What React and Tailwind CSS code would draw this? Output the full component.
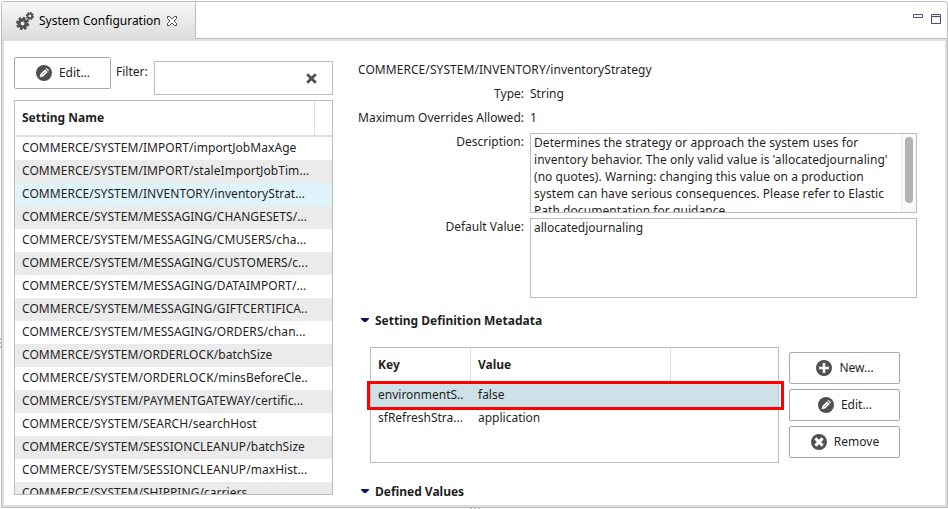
import React from "react";

const settings = [
  "COMMERCE/SYSTEM/IMPORT/importJobMaxAge",
  "COMMERCE/SYSTEM/IMPORT/staleImportJobTim...",
  "COMMERCE/SYSTEM/INVENTORY/inventoryStrat...",
  "COMMERCE/SYSTEM/MESSAGING/CHANGESETS/...",
  "COMMERCE/SYSTEM/MESSAGING/CMUSERS/cha...",
  "COMMERCE/SYSTEM/MESSAGING/CUSTOMERS/c...",
  "COMMERCE/SYSTEM/MESSAGING/DATAIMPORT/...",
  "COMMERCE/SYSTEM/MESSAGING/GIFTCERTIFICA..",
  "COMMERCE/SYSTEM/MESSAGING/ORDERS/chan...",
  "COMMERCE/SYSTEM/ORDERLOCK/batchSize",
  "COMMERCE/SYSTEM/ORDERLOCK/minsBeforeCle..",
  "COMMERCE/SYSTEM/PAYMENTGATEWAY/certific...",
  "COMMERCE/SYSTEM/SEARCH/searchHost",
  "COMMERCE/SYSTEM/SESSIONCLEANUP/batchSize",
  "COMMERCE/SYSTEM/SESSIONCLEANUP/maxHist...",
  "COMMERCE/SYSTEM/SHIPPING/carriers",
];

function Gear({ cx, cy, r, hole, teeth, w }) {
  return (
    <g transform={`translate(${cx} ${cy})`}>
      {Array.from({ length: teeth }, (_, i) => (
        <rect key={i} x={-w / 2} y={-r} width={w} height={r / 2} fill="#505050" transform={`rotate(${(i * 360) / teeth + 15})`} />
      ))}
      <circle r={(r * 0.76 + hole) / 2} fill="none" stroke="#505050" strokeWidth={r * 0.76 - hole} />
    </g>
  );
}

function GearsIcon() {
  return (
    <svg width="18" height="18" viewBox="0 0 18 18" className="block shrink-0">
      <Gear cx={6.6} cy={11.5} r={6.6} hole={2} teeth={8} w={2.8} />
      <Gear cx={13.9} cy={4} r={4.1} hole={1.4} teeth={8} w={1.8} />
    </svg>
  );
}

function RoundIcon({ kind }) {
  return (
    <svg width="16" height="16" viewBox="0 0 16 16" className="block shrink-0">
      <circle cx="8" cy="8" r="8" fill="#505050" />
      {kind === "plus" && <path d="M8 3v10M3 8h10" stroke="#fff" strokeWidth="2.6" />}
      {kind === "remove" && <path d="M4.4 4.4l7.2 7.2M11.6 4.4l-7.2 7.2" stroke="#fff" strokeWidth="3" />}
      {kind === "edit" && (
        <g fill="#fff">
          <path d="M3.700 12.300l.7-3.400 4.700-4.700 2.700 2.700L7.100 11.600z" />
          <path d="M9.700 3.600l.9-.7 2.500 2.500-.7.900z" />
          <path d="M6 10.200l3.800-3.800" stroke="#505050" strokeWidth=".6" />
        </g>
      )}
    </svg>
  );
}

function Button({ kind, label, width }) {
  return (
    <button className={`flex h-8 shrink-0 items-center justify-center rounded-[2px] border border-[#a9a9a9] bg-white pl-px ${width}`}>
      <RoundIcon kind={kind} />
      <span className="ml-[7px]">{label}</span>
    </button>
  );
}

function SectionTitle({ children }) {
  return (
    <div className="flex h-4 items-center font-bold">
      <svg width="8" height="4" viewBox="0 0 8 4" className="mr-1.5 mb-0.5 ml-[3px] block">
        <path d="M0 0h8v1L5 4H3L0 1z" fill="#0b1560" />
      </svg>
      {children}
    </div>
  );
}

function Field({ label, children }) {
  return (
    <div className="flex h-4 items-center">
      <div className="w-[166px] text-right">{label}</div>
      <div className="ml-1.5">{children}</div>
    </div>
  );
}

export default function App() {
  return (
    <div className="relative flex h-[509px] w-[948px] overflow-hidden bg-white pt-px pl-px font-['Noto_Sans',sans-serif] text-[12px] leading-4 whitespace-nowrap text-[#1f1f1f]">
      <div className="flex h-[507px] w-[947px] flex-col rounded-t-[3px] border border-[#bdbdbd]">
        <div className="flex h-[37px] shrink-0">
          <div className="flex w-[194px] items-center rounded-tl-[2px] border-r border-[#bdbdbd] bg-gradient-to-b from-[#f7f7f7] to-[#dddddd] pl-3.5 text-black">
            <GearsIcon />
            <span className="ml-[5px]">System Configuration</span>
            <svg width="10" height="10" viewBox="0 0 10 10" className="ml-1.5 block">
              <path d="M.5 .5h2L5 3 7.500 .5h2v2L7 5l2.500 2.500v2h-2L5 7 2.500 9.500h-2v-2L3 5 .5 2.500z" fill="#fff" stroke="#333" strokeWidth=".9" />
            </svg>
          </div>
          <div className="flex flex-1 items-start justify-end gap-2 border-b border-[#bdbdbd] pt-3 pr-1.5">
            <svg width="10" height="4" viewBox="0 0 10 4" className="block">
              <path d="M.5 .5h9v3h-9z" fill="#fff" stroke="#4a4f74" />
            </svg>
            <svg width="10" height="10" viewBox="0 0 10 10" className="block">
              <path d="M.5 .5h9v9h-9zM0 2.500h10" fill="#f7f9f6" stroke="#4a4f74" />
            </svg>
          </div>
        </div>

        <div className="flex min-h-0 flex-1 border-2 border-[#dedede]">
          <div className="w-[329px] shrink-0 pl-2.5">
            <div className="flex h-[59px] items-start pt-4">
              <Button kind="edit" label="Edit..." width="w-[97px]" />
              <div className="mt-[7px] ml-[5px] w-[38px]">Filter:</div>
              <div className="mt-1 flex h-[34px] w-[179px] items-center justify-end border border-[#bdbdbd] pr-[15px]">
                <svg width="11" height="11" viewBox="0 0 11 11" className="block">
                  <path d="M1.200 1.200l8.600 8.600M9.800 1.200l-8.600 8.600" stroke="#505050" strokeWidth="2.800" />
                </svg>
              </div>
            </div>
            <div className="h-[395px] overflow-hidden border border-[#bdbdbd]">
              <div className="flex h-9 border-b-2 border-[#dedede] font-bold">
                <div className="flex w-[300px] items-center border-r border-[#dedede] pl-[7px]">Setting Name</div>
              </div>
              {settings.map((name, i) => (
                <div key={name} className={`h-[23px] pl-[7px] leading-[22px] tracking-[0.06px] ${i === 2 ? "bg-[#dff3fa]" : i % 2 ? "bg-[#ebebeb]" : "bg-white"}`}>
                  {name}
                </div>
              ))}
            </div>
          </div>

          <div className="min-w-0 flex-1 pt-[21px] pl-[25px]">
            <div className="flex flex-col gap-2">
              <div className="tracking-[0.06px]">COMMERCE/SYSTEM/INVENTORY/inventoryStrategy</div>
              <Field label="Type:">String</Field>
              <Field label="Maximum Overrides Allowed:">1</Field>
            </div>
            <div className="mt-[7px] flex">
              <div className="w-[166px] pt-px text-right">Description:</div>
              <div className="ml-1.5 flex h-20 w-[387px] overflow-hidden border border-[#bdbdbd]">
                <div className="flex-1 pl-[3px] leading-[17px] tracking-[0.05px] whitespace-pre">
                  {"Determines the strategy or approach the system uses for\ninventory behavior. The only valid value is 'allocatedjournaling'\n(no quotes). Warning: changing this value on a production\nsystem can have serious consequences. Please refer to Elastic\nPath documentation for guidance."}
                </div>
                <div className="w-[15px] border-l border-[#e8e8e8] bg-[#fafafa] pt-[3px] pl-[3px]">
                  <div className="h-[66px] w-2 rounded-full bg-[#b3b3b3]" />
                </div>
              </div>
            </div>
            <div className="mt-[5px] flex">
              <div className="w-[166px] pt-px text-right">Default Value:</div>
              <div className="ml-1.5 h-20 w-[387px] border border-[#bdbdbd] pl-[3px] leading-[17px]">allocatedjournaling</div>
            </div>

            <div className="mt-[15px]">
              <SectionTitle>Setting Definition Metadata</SectionTitle>
            </div>
            <div className="mt-[18px] ml-3 flex">
              <div className="relative h-[116px] w-[409px] border border-[#bdbdbd]">
                <div className="flex h-9 border-b-2 border-[#dedede] font-bold">
                  <div className="flex w-[100px] items-center border-r border-[#dedede] pl-[7px]">Key</div>
                  <div className="flex w-[200px] items-center border-r border-[#dedede] pl-[7px]">Value</div>
                </div>
                <div className="flex h-[23px] bg-[#cfe1e8] leading-[22px]">
                  <div className="w-[100px] pl-[7px]">environmentS..</div>
                  <div className="pl-[7px]">false</div>
                </div>
                <div className="flex h-[23px] leading-[22px]">
                  <div className="w-[100px] pl-[7px]">sfRefreshStra...</div>
                  <div className="pl-[7px]">application</div>
                </div>
                <div className="absolute top-[33px] -left-1 h-[29px] w-[417px] border-3 border-[#ff0000]" />
              </div>
              <div className="mt-[5px] ml-2.5 flex flex-col gap-[5px]">
                <Button kind="plus" label="New..." width="w-[111px]" />
                <Button kind="edit" label="Edit..." width="w-[111px]" />
                <Button kind="remove" label="Remove" width="w-[111px]" />
              </div>
            </div>
            <div className="mt-[21px]">
              <SectionTitle>Defined Values</SectionTitle>
            </div>
          </div>
        </div>
      </div>
      <svg width="10" height="1" viewBox="0 0 10 1" className="absolute top-[508px] left-[470px]">
        <path d="M0 0h2v1H0zM4 0h2v1H4zM8 0h2v1H8z" fill="#bbb" />
      </svg>
      <svg width="1" height="10" viewBox="0 0 1 10" className="absolute top-[338px] left-0">
        <path d="M0 0h1v2H0zM0 4h1v2H0zM0 8h1v2H0z" fill="#bbb" />
      </svg>
    </div>
  );
}
